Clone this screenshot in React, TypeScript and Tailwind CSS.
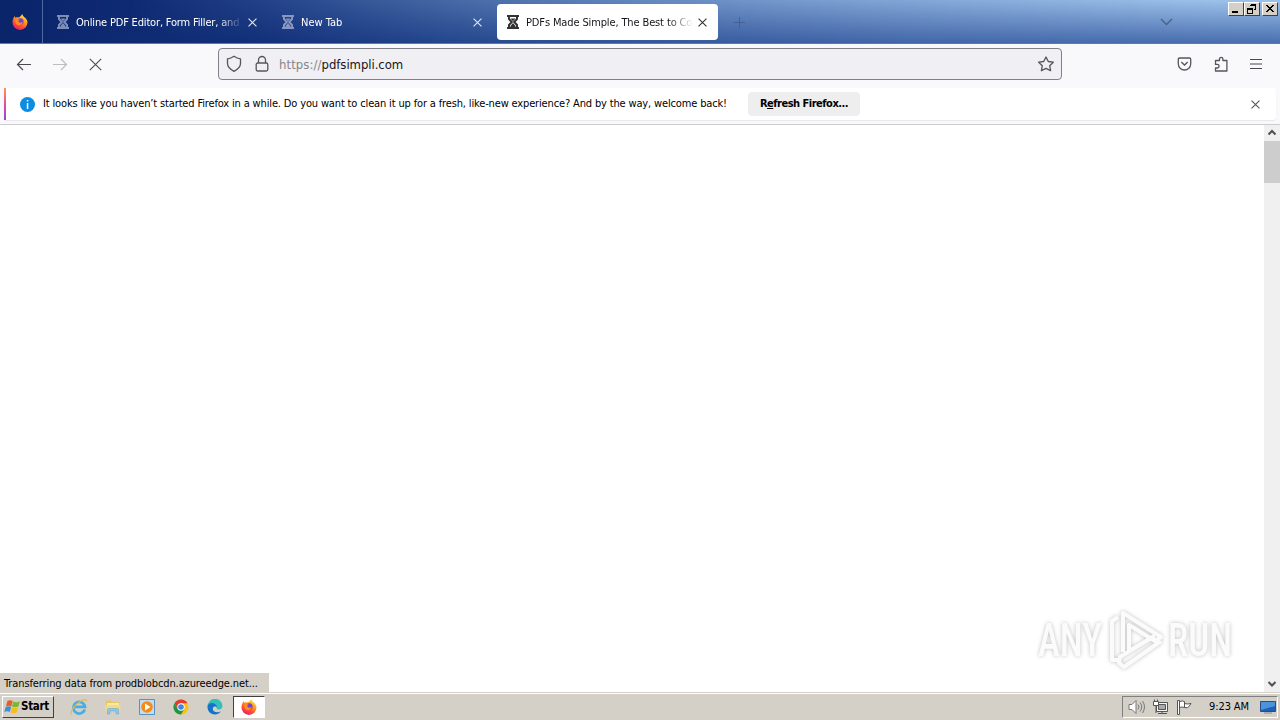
import React from "react";

const X = ({ s = 10, c = "#333", w = 1.1 }: { s?: number; c?: string; w?: number }) => (
  <svg width={s} height={s} viewBox="0 0 10 10" className="block shrink-0" style={{ color: c }}>
    <path d="M.6.6 9.4 9.4M9.4.6.6 9.4" fill="none" stroke="currentColor" strokeWidth={(w * 10) / s} />
  </svg>
);

const Hourglass = ({ c }: { c: string }) => (
  <svg width="14" height="16" viewBox="0 0 14 16" className="block shrink-0" fill="none" stroke={c}>
    <path d="M1 2h12M1 14h12" strokeWidth="2" />
    <path d="M3 2.500v2.500L5.800 8 3 11v2.500M11 2.500v2.500L8.200 8l2.800 3v2.500" strokeWidth="2" />
    <path d="M4.500 4.500h5L7 7.300zM7 9l2.500 3v1h-5v-1z" fill={c} stroke="none" />
  </svg>
);

const Firefox = ({ id }: { id: string }) => (
  <svg width="16" height="16" viewBox="0 0 16 16" className="block shrink-0">
    <defs>
      <linearGradient id={id} x1=".8" y1="0" x2=".25" y2="1">
        <stop offset="0" stopColor="#fff04f" />
        <stop offset=".35" stopColor="#ffa41c" />
        <stop offset=".7" stopColor="#ff4a37" />
        <stop offset="1" stopColor="#e3167c" />
      </linearGradient>
    </defs>
    <path d="M10.200 0c.3 1.600 1.500 2.500 2.500 3.400 1.200.9 2.800 2.500 2.800 5.200A7.500 7.300 0 0 1 .5 8.600C.5 6.200 1.300 3.500 2.900 2c0 .8.1 1.300.5 1.700C4.500 2.800 5.500 3.200 6.500 3.500 7.700 3.200 9.300 1.500 10.200 0z" fill={`url(#${id})`} />
    <circle cx="8.300" cy="7.500" r="3.300" fill="#7b3fd0" />
    <path d="M3.600 5.500c1.600-.9 3-.7 4.300.6-1.600.2-1.800 1-1.200 1.800.9 1.100 2.700 1 4-.2-.2 3.200-4.500 4.700-6.600 2.300-1.100-1.200-1.200-3-.5-4.500z" fill="#ff8a1e" />
  </svg>
);

const Ie = () => (
  <svg width="18" height="18" viewBox="0 0 18 18">
    <path d="M14.800 11.500A5.800 5.800 0 1 1 15 8.800H5" fill="none" stroke="#46aee4" strokeWidth="2.700" />
    <path d="M1.500 16.500C-.5 14 5 6.500 11 3c3-1.800 5.700-2 5.500.5" fill="none" stroke="#e2bb50" strokeWidth="1.200" />
  </svg>
);

const Explorer = () => (
  <svg width="16" height="16" viewBox="0 0 16 16">
    <path d="M1 1.500h5l1 1.500h7.500V12H1z" fill="#e6c566" />
    <path d="M2 4h12v7H2z" fill="#fbe9a0" />
    <path d="M.5 6h15v6.500H.5z" fill="#f3d98a" />
    <path d="M2.500 15v-4.500q0-1 1-1h9q1 0 1 1V15H11v-3H5v3z" fill="#8cc8ea" stroke="#5ba5cf" strokeWidth=".5" />
  </svg>
);

const Media = () => (
  <svg width="16" height="16" viewBox="0 0 16 16">
    <path d="M.5.500h15v15H.5z" fill="#c4dcf0" stroke="#5792c4" />
    <circle cx="8" cy="8" r="5.800" fill="#f58a16" />
    <path d="M6 4.500v7L11.500 8z" fill="#fff" />
  </svg>
);

const Chrome = () => (
  <svg width="16" height="16" viewBox="0 0 16 16">
    <circle cx="8" cy="8" r="7.500" fill="#fbc116" />
    <path d="M1.500 4.250A7.500 7.500 0 0 1 14.500 4.250H8L4.750 9.900z" fill="#e33b2e" />
    <path d="M1.500 4.250A7.500 7.500 0 0 0 8 15.500l3.250-5.600H4.750z" fill="#229342" />
    <circle cx="8" cy="8" r="3.700" fill="#fff" />
    <circle cx="8" cy="8" r="2.800" fill="#4285e8" />
  </svg>
);

const Edge = () => (
  <svg width="16" height="16" viewBox="0 0 16 16">
    <path d="M.500 7.500A7.500 7.500 0 0 1 15.500 7c0 2-1.500 3.500-3.500 3.500-1.500 0-2.500-.5-2.200-1.300C10.600 7 9 5.500 7 5.500 4 5.500 1.500 6 .500 7.500z" fill="#35bfb8" />
    <path d="M.5 7.500C1 4.500 5 3 8 5c2 1.300 2.300 3 1.800 4-.5-2-4-2-4 1 0 2 3 4.500 8 2.500C12 15 9 16 6.500 15.300 2.500 14.500.300 11 .5 7.500z" fill="#1673c9" />
  </svg>
);

const Start = () => (
  <svg width="17" height="16" viewBox="0 0 17 16" className="shrink-0">
    <path d="M3.500 1.800C5.500.8 7 1 8.700 2L7.300 7.500C5.700 6.500 4 6.500 2 7.300z" fill="#ee5a24" />
    <path d="M9.300 2.400c2 1 4 1 6.500-.2l-1.400 5.300c-2.200 1-4.200 1-6.400 0z" fill="#7cb82f" />
    <path d="M1.700 8c2-.9 3.800-.8 5.400.1l-1.400 5c-1.700-1-3.400-1-5.400-.1z" fill="#3a8fdb" />
    <path d="M7.900 8.300c2 1 4 1 6.200.1l-1.400 5c-2.200 1-4.200 1-6.200 0z" fill="#f5bd1d" />
  </svg>
);

const Tab = ({ title, dark, active, text }: { title: string; dark: string; active?: boolean; text: string }) => (
  <div className={active ? "flex h-9 w-[221px] items-center rounded bg-white pl-[9px] pr-[11px] text-[#15141a]" : "flex h-9 w-[221px] items-center pl-[9px] pr-[11px] text-white"}>
    <Hourglass c={dark} />
    <div className={`ml-[6px] mt-[2px] w-[167px] overflow-hidden whitespace-nowrap text-[11px] leading-[14px] mask-r-from-[85%] ${text}`}>{title}</div>
    <div className="ml-auto"><X s={9} c={active ? "#333" : "#e2e6f2"} /></div>
  </div>
);

const WinBtn = ({ children }: { children: React.ReactNode }) => (
  <div className="flex h-[14px] w-4 items-center justify-center border border-b-[#404040] border-l-white border-r-[#404040] border-t-white bg-[#d4d0c8]">
    <svg width="12" height="12" viewBox="0 0 12 12" fill="none" stroke="#000" shapeRendering="crispEdges">{children}</svg>
  </div>
);

export default function App() {
  return (
    <div className="flex h-[720px] w-[1280px] flex-col overflow-hidden bg-white font-['DejaVu_Sans_Condensed','DejaVu_Sans',sans-serif] text-[11px] font-stretch-condensed text-black">
      <header className="relative flex h-[44px] shrink-0 border-b border-[#6478a0] bg-[linear-gradient(90deg,#0a246a_0%,#12307a_20%,#24468c_35%,#34579b_50%,#4266a8_70%,#4a70b0_100%)]">
        <div className="absolute inset-0 bg-[linear-gradient(90deg,#a6caf000_10%,#a6caf0e6_95%)] mask-b-from-0% mask-b-to-100%" />
        <div className="relative flex w-full">
          <div className="flex w-[43px] items-center justify-center border-r border-[#5268a0] pr-0.5"><Firefox id="fx1" /></div>
          <div className="flex gap-1 pl-1 pt-1">
            <Tab title="Online PDF Editor, Form Filler, and" dark="#7d8db9" text="tracking-[-0.17px]" />
            <Tab title="New Tab" dark="#8797c1" text="tracking-[0px]" />
            <Tab title="PDFs Made Simple, The Best to Con" dark="#333" active text="tracking-[-0.13px]" />
          </div>
          <svg className="ml-[16px] mt-[17px]" width="11" height="11" viewBox="0 0 11 11" stroke="#485f91" fill="none"><path d="M5.500 0v11M0 5.500h11" /></svg>
          <svg className="ml-auto mr-[55px] mt-[18px]" width="13" height="8" viewBox="0 0 13 8" stroke="#4b6186" strokeWidth="1.400" fill="none"><path d="m1 1 5.500 5.500L12 1" /></svg>
          <div className="mr-[2px] mt-[2px] flex">
            <WinBtn><path d="M2 9h6M2 8h6" /></WinBtn>
            <WinBtn><path d="M4.500 1.500h5v5H8M4 2.500h6M1.500 5.500h5v5h-5zM1 6.500h6" /></WinBtn>
            <div className="ml-[2px]"><WinBtn><path d="m2 2 7 7M3 2l7 7M9 2l-7 7M10 2l-7 7" /></WinBtn></div>
          </div>
        </div>
      </header>

      <div className="flex h-[44px] shrink-0 items-start bg-[#f9f9fb] pt-1">
        <div className="flex h-8 w-[218px] items-center pl-4">
          <svg width="16" height="16" viewBox="0 0 16 16" fill="none" stroke="#4a4a50" strokeWidth="1.200"><path d="M15 8.500H1.500M7 3 1.500 8.500 7 14" /></svg>
          <svg className="ml-5" width="16" height="16" viewBox="0 0 16 16" fill="none" stroke="#bcbcc1" strokeWidth="1.200"><path d="M1 8.500h13.500M9 3l5.500 5.500L9 14" /></svg>
          <div className="ml-[21px] mt-px"><X s={13} c="#4a4a50" /></div>
        </div>
        <div className="flex h-8 w-[844px] items-center rounded border border-[#808087] bg-[#f0f0f4] pl-[7px] pr-[7px]">
          <svg width="16" height="18" viewBox="0 0 16 18" fill="none" stroke="#55555b" strokeWidth="1.300"><path d="M8 1.300Q11 3.500 14.500 3.800v4.700c0 3.500-3 6-6.500 7.900-3.500-1.900-6.500-4.400-6.500-7.900V3.800Q5 3.500 8 1.300z" strokeLinejoin="round" /></svg>
          <svg className="ml-3" width="16" height="18" viewBox="0 0 16 18" fill="none" stroke="#55555b" strokeWidth="1.300"><rect x="2.200" y="8" width="11.600" height="8" rx="1.500" /><path d="M4.500 8V5a3.500 3.500 0 0 1 7 0v3" /></svg>
          <div className="ml-[9px] mt-[2px] whitespace-nowrap text-[13px] leading-4 tracking-[-0.06px] text-[#15141a]"><span className="tracking-[0.08px] text-[#85858b]">https://</span>pdfsimpli.com</div>
          <svg className="ml-auto" width="17" height="17" viewBox="0 0 17 17" fill="none" stroke="#55555b" strokeWidth="1.300" strokeLinejoin="round"><path d="m9 1 2.300 4.500 5 .7-3.600 3.500.9 5L9 12.400l-4.600 2.300.9-5L1.700 6.200l5-.7z" /></svg>
        </div>
        <div className="ml-auto mr-[18px] flex h-8 items-center gap-[21px]">
          <svg width="16" height="16" viewBox="0 0 16 16" fill="none" stroke="#55555b" strokeWidth="1.300"><path d="M3.500 2h10q1.200 0 1.200 1.200V8a6.200 6 0 0 1-12.400 0V3.200Q2.300 2 3.500 2z" /><path d="m5.300 6 3.200 3 3.200-3" /></svg>
          <svg width="16" height="17" viewBox="0 0 16 17" fill="none" stroke="#55555b" strokeWidth="1.300" strokeLinejoin="round"><path d="M2.500 4.500h4V3a1.700 1.700 0 0 1 3.400 0v1.500h4V15H2.500v-3h1.800a1.800 1.800 0 0 0 0-3.600H2.500z" /></svg>
          <svg width="12" height="12" viewBox="0 0 12 12" stroke="#4a4a50" strokeWidth="1.200"><path d="M0 1.500h12M0 6h12M0 10.500h12" /></svg>
        </div>
      </div>

      <div className="flex h-[37px] shrink-0 border-b border-[#cccccf] bg-[#f9f9fb] px-1">
        <div className="flex h-8 w-full rounded-[3px] bg-white shadow-[0_1px_1px_#e7e7ea]">
          <div className="w-[2px] bg-[linear-gradient(#ff9750,#e05098,#8b48da)]" />
          <div className="flex flex-1 items-center pl-[14px] pr-[16px]">
            <svg width="15" height="15" viewBox="0 0 15 15"><circle cx="7.500" cy="7.500" r="7.500" fill="#0b8de2" /><path d="M6.800 3h1.500v1.500H6.800zM6.800 6h1.500v6H6.800z" fill="#fff" /></svg>
            <div className="ml-2 w-[705px] whitespace-nowrap leading-[14px] tracking-[-0.149px]">It looks like you haven’t started Firefox in a while. Do you want to clean it up for a fresh, like-new experience? And by the way, welcome back!</div>
            <button className="flex h-6 w-28 items-center justify-center whitespace-nowrap rounded bg-[#eeeeef] pt-px font-bold tracking-[-0.5px]">R<span className="underline">e</span>fresh Firefox...</button>
            <div className="ml-auto"><X s={9} c="#55555b" /></div>
          </div>
        </div>
      </div>

      <main className="flex min-h-0 flex-1">
        <div className="flex flex-1 flex-col justify-end">
          <div className="mb-[2px] mr-[31px] flex h-[62px] items-center justify-end font-['Roboto',sans-serif] text-[47px] text-[#fbfbfb] drop-shadow-[0_0_2px_#c0c0c0]">
            <div className="w-[69px]"><div className="w-max origin-left scale-x-[.79] font-medium leading-[62px]">ANY</div></div>
            <svg width="61" height="62" viewBox="0 0 61 62" fill="none" stroke="#fbfbfb" strokeWidth="4" strokeLinejoin="round"><path d="M16 43V4l38 24-6 4-26-16v26l26-15M11 8 5 12v39h7M54 32 17 58l-5-4 1-6 34-21" /></svg>
            <div className="w-[65px]"><div className="w-max origin-left scale-x-[.79] font-medium leading-[62px]">RUN</div></div>
          </div>
          <div className="flex h-[19px] w-[269px] items-center whitespace-nowrap bg-[#d4d0c8] pl-[4px] pt-[3px] leading-[14px] tracking-[-0.11px]">Transferring data from prodblobcdn.azureedge.net...</div>
        </div>
        <div className="flex w-4 flex-col items-center bg-[#f0f0f0]">
          <svg className="h-4 w-4 shrink-0" viewBox="0 0 16 16" fill="none" stroke="#505050" strokeWidth="2"><path d="m4.500 9.500 3.500-3.500 3.500 3.500" /></svg>
          <div className="h-[42px] w-full bg-[#cdcdcd]" />
          <svg className="mt-auto h-4 w-4 shrink-0" viewBox="0 0 16 16" fill="none" stroke="#505050" strokeWidth="2"><path d="m4.500 6 3.500 3.500L11.500 6" /></svg>
        </div>
      </main>

      <footer className="flex h-7 shrink-0 border-t border-[#d4d0c8] bg-[#d4d0c8]">
        <div className="flex w-full items-center border-t border-white pl-[2px] pr-[2px]">
          <div className="flex h-[22px] w-[52px] items-center border border-b-[#404040] border-l-white border-r-[#404040] border-t-white pl-[1px] text-[11.500px] font-bold tracking-[-0.3px]"><Start />Start</div>
          <div className="ml-4 flex h-[22px] items-center gap-[18px]"><Ie /><div className="-ml-px flex gap-[18px]"><Explorer /><Media /><Chrome /><Edge /></div></div>
          <div className="ml-[10px] flex h-[22px] w-8 items-center justify-center border border-b-white border-l-[#404040] border-r-white border-t-[#404040] bg-white"><Firefox id="fx2" /></div>
          <div className="ml-auto flex h-[22px] w-[156px] items-center border border-b-white border-l-[#808080] border-r-white border-t-[#808080] pl-[5px]">
            <svg width="18" height="16" viewBox="0 0 18 16" fill="none" stroke="#777" strokeWidth="1"><path d="M1 5.500h3l4-4v13l-4-4H1z" fill="#fff" /><path d="M10 5.500q2 2.500 0 5M12 3.500q3.500 4.500 0 9M14.500 2q4 6 0 12" /></svg>
            <svg className="ml-[6px]" width="17" height="16" viewBox="0 0 17 16" fill="none" stroke="#555"><path d="M4.500 3.500h11v9h-11z" fill="#f5f5f5" /><path d="M6.500 5.500h7v5h-7z" fill="#aaa" /><path d="M6 14.500h9M10 12v3" /><path d="M1.500 2.500h5v4h-5zM2.500.500v2M5.500.500v2M4 6.500V14" fill="#fff" /></svg>
            <svg className="ml-[7px]" width="17" height="16" viewBox="0 0 17 16" stroke="#555"><path d="M1.500 1.500h2v14h-2zM3.500 2.500q3-1 5 0v6q-3-1-5 0zM8.500 4.500q3 1 6.500 0l-2 3q-1 2-4.500 1" fill="#fff" /></svg>
            <div className="ml-[16px] whitespace-nowrap tracking-[-0.1px]">9:23 AM</div>
            <svg className="ml-auto mr-[1px]" width="16" height="14" viewBox="0 0 16 14"><path d="M.5 1.500h15v10H.5z" fill="#1d60b8" stroke="#274f84" /><path d="M1 2h14v4L1 10z" fill="#4b93dc" /><path d="M4 13h8" stroke="#888" /></svg>
          </div>
        </div>
      </footer>
    </div>
  );
}
